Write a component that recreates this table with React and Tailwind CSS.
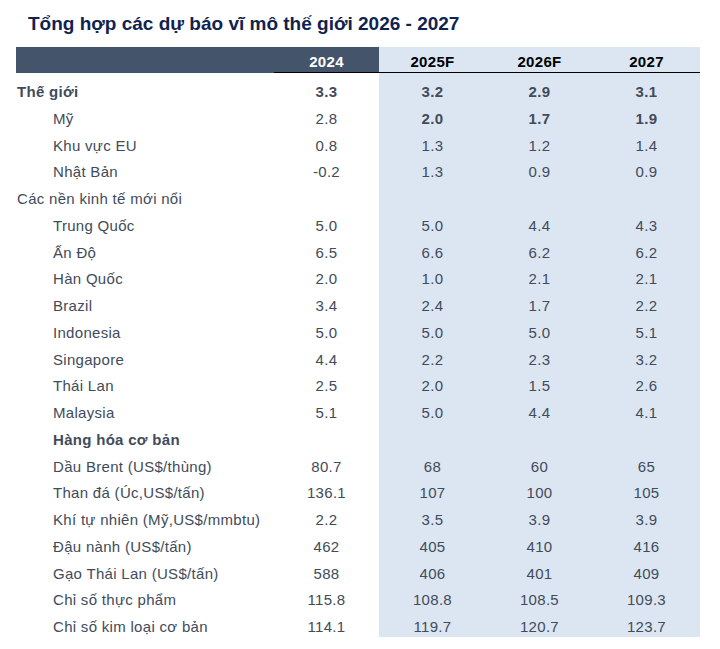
const rows = [
  { label: 'Thế giới', lvl: 0, bold: true, v: ['3.3', '3.2', '2.9', '3.1'], bv: [true, true, true, true] },
  { label: 'Mỹ', lvl: 1, v: ['2.8', '2.0', '1.7', '1.9'], bv: [false, true, true, true] },
  { label: 'Khu vực EU', lvl: 1, v: ['0.8', '1.3', '1.2', '1.4'] },
  { label: 'Nhật Bản', lvl: 1, v: ['-0.2', '1.3', '0.9', '0.9'] },
  { label: 'Các nền kinh tế mới nổi', lvl: 0, v: ['', '', '', ''] },
  { label: 'Trung Quốc', lvl: 1, v: ['5.0', '5.0', '4.4', '4.3'] },
  { label: 'Ấn Độ', lvl: 1, v: ['6.5', '6.6', '6.2', '6.2'] },
  { label: 'Hàn Quốc', lvl: 1, v: ['2.0', '1.0', '2.1', '2.1'] },
  { label: 'Brazil', lvl: 1, v: ['3.4', '2.4', '1.7', '2.2'] },
  { label: 'Indonesia', lvl: 1, v: ['5.0', '5.0', '5.0', '5.1'] },
  { label: 'Singapore', lvl: 1, v: ['4.4', '2.2', '2.3', '3.2'] },
  { label: 'Thái Lan', lvl: 1, v: ['2.5', '2.0', '1.5', '2.6'] },
  { label: 'Malaysia', lvl: 1, v: ['5.1', '5.0', '4.4', '4.1'] },
  { label: 'Hàng hóa cơ bản', lvl: 1, bold: true, v: ['', '', '', ''] },
  { label: 'Dầu Brent (US$/thùng)', lvl: 1, v: ['80.7', '68', '60', '65'] },
  { label: 'Than đá (Úc,US$/tấn)', lvl: 1, v: ['136.1', '107', '100', '105'] },
  { label: 'Khí tự nhiên (Mỹ,US$/mmbtu)', lvl: 1, v: ['2.2', '3.5', '3.9', '3.9'] },
  { label: 'Đậu nành (US$/tấn)', lvl: 1, v: ['462', '405', '410', '416'] },
  { label: 'Gạo Thái Lan (US$/tấn)', lvl: 1, v: ['588', '406', '401', '409'] },
  { label: 'Chỉ số thực phẩm', lvl: 1, v: ['115.8', '108.8', '108.5', '109.3'] },
  { label: 'Chỉ số kim loại cơ bản', lvl: 1, v: ['114.1', '119.7', '120.7', '123.7'] },
]

export default function App() {
  return (
    <div className="w-[720px] h-[649px] bg-white font-['Liberation_Sans',Arial,sans-serif] text-[#414b5a] tracking-[0.3px]">
      {/* Title */}
      <h1 className="pl-[28px] pt-[13px] h-[47px] text-[19px] font-bold text-[#0f2350] leading-[22px] tracking-normal">
        Tổng hợp các dự báo vĩ mô thế giới 2026 - 2027
      </h1>

      <div className="ml-[16px] w-[684px] flex">
        {/* labels + 2024 */}
        <div className="w-[363px] flex flex-col">
          <div className="h-[26px] shrink-0 bg-[#44546a] flex">
            <div className="w-[258px]" />
            <div className="w-[105px] border-b border-black flex items-end justify-center pb-[1px] text-[15px] font-bold text-white leading-[18px]">2024</div>
          </div>
          <div className="pt-[6px]">
            {rows.map((r, i) => (
              <div key={i} className="h-[26.75px] flex items-center text-[15px]">
                <div className={`w-[258px] ${r.lvl ? 'pl-[37px]' : 'pl-[1px]'} ${r.bold ? 'font-bold' : ''}`}>{r.label}</div>
                <div className={`w-[105px] text-center ${r.bv && r.bv[0] ? 'font-bold' : ''}`}>{r.v[0]}</div>
              </div>
            ))}
          </div>
        </div>

        {/* forecast columns */}
        <div className="w-[321px] h-[590px] bg-[#dce6f2] flex flex-col">
          <div className="h-[26px] shrink-0 flex border-b border-black">
            {['2025F', '2026F', '2027'].map((h) => (
              <div key={h} className="flex-1 flex items-end justify-center pb-[1px] text-[15px] font-bold text-black leading-[18px]">{h}</div>
            ))}
          </div>
          <div className="pt-[6px]">
            {rows.map((r, i) => (
              <div key={i} className="h-[26.75px] flex items-center text-[15px]">
                {[1, 2, 3].map((c) => (
                  <div key={c} className={`flex-1 text-center ${r.bv && r.bv[c] ? 'font-bold' : ''}`}>{r.v[c]}</div>
                ))}
              </div>
            ))}
          </div>
        </div>
      </div>
    </div>
  )
}
